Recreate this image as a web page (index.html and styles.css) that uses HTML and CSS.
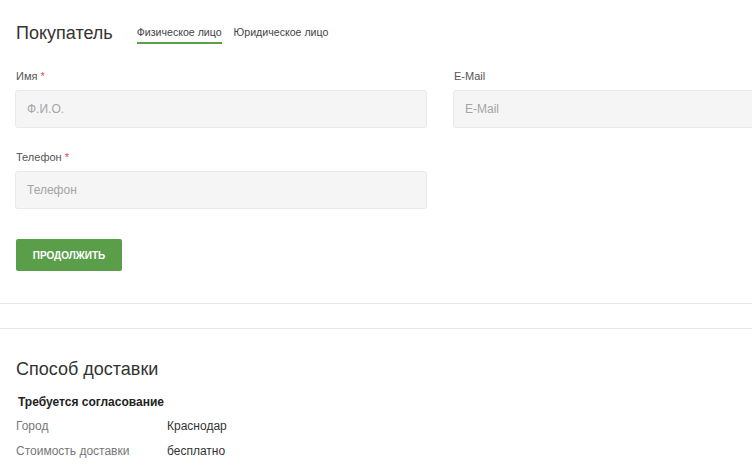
FILE: index.html
```html
<!DOCTYPE html>
<html lang="ru">
<head>
<meta charset="utf-8">
<title>Оформление заказа</title>
<link rel="stylesheet" href="styles.css">
</head>
<body>
<div class="page">
  <section class="buyer">
    <div class="head">
      <h2 class="title">Покупатель</h2>
      <nav class="tabs">
        <span class="tab active">Физическое лицо</span>
        <span class="tab">Юридическое лицо</span>
      </nav>
    </div>
    <div class="grid">
      <div class="field">
        <label class="label">Имя <span class="req">*</span></label>
        <div class="input">Ф.И.О.</div>
      </div>
      <div class="field">
        <label class="label">E-Mail</label>
        <div class="input">E-Mail</div>
      </div>
      <div class="field">
        <label class="label">Телефон <span class="req">*</span></label>
        <div class="input">Телефон</div>
      </div>
    </div>
    <button class="btn">ПРОДОЛЖИТЬ</button>
  </section>
  <div class="sep"></div>
  <section class="delivery">
    <h2 class="title">Способ доставки</h2>
    <div class="dname">Требуется согласование</div>
    <div class="row"><span class="key">Город</span><span class="val">Краснодар</span></div>
    <div class="row"><span class="key">Стоимость доставки</span><span class="val">бесплатно</span></div>
  </section>
</div>
</body>
</html>
```

FILE: styles.css
```css
html, body {
  margin: 0;
  padding: 0;
  overflow: hidden;
  background: #fff;
}
body {
  font-family: "Liberation Sans", Arial, sans-serif;
  color: #333;
}
.page {
  width: 752px;
  overflow: hidden;
}
.buyer {
  padding: 22px 0 32px 15px;
  border-bottom: 1px solid #e6e6e6;
}
.head {
  display: flex;
  align-items: flex-start;
  height: 48px;
}
.title {
  margin: 0;
  font-size: 18px;
  font-weight: normal;
  line-height: 22px;
  color: #333;
  padding-left: 1px;
}
.tabs {
  display: flex;
  gap: 12px;
  margin-left: 24px;
  padding-top: 4px;
}
.tab {
  font-size: 10.6px;
  line-height: 13px;
  color: #444;
  padding-bottom: 3px;
  border-bottom: 2px solid transparent;
}
.tab.active {
  border-bottom-color: #5b9f4c;
}
.grid {
  display: grid;
  grid-template-columns: 412px 412px;
  column-gap: 26px;
  row-gap: 23px;
}
.field {
  display: flex;
  flex-direction: column;
}
.label {
  font-size: 11px;
  line-height: 13px;
  color: #555;
  margin-bottom: 7px;
  padding-left: 1px;
}
.req {
  color: #e04b4b;
}
.input {
  box-sizing: border-box;
  height: 38px;
  border: 1px solid #e9e9e9;
  border-radius: 3px;
  background: #f5f5f5;
  padding: 0 11px;
  font-size: 12px;
  line-height: 36px;
  color: #a5a5a5;
}
.btn {
  margin: 30px 0 0 1px;
  width: 106px;
  height: 32px;
  border: 0;
  border-radius: 2px;
  background: #5a9e4a;
  color: #fff;
  font-family: "Liberation Sans", Arial, sans-serif;
  font-size: 10px;
  font-weight: bold;
  padding: 0;
  display: block;
}
.sep {
  height: 24px;
  border-bottom: 1px solid #e6e6e6;
}
.delivery {
  padding: 29px 0 0 16px;
}
.delivery .title {
  padding-left: 0;
  margin-bottom: 15px;
}
.dname {
  font-size: 12px;
  font-weight: bold;
  color: #222;
  line-height: 15px;
  padding-left: 2px;
  margin-bottom: 9px;
}
.row {
  display: flex;
  font-size: 12px;
  line-height: 15px;
  margin-bottom: 10px;
}
.key {
  width: 151px;
  color: #777;
}
.val {
  color: #333;
}
```
